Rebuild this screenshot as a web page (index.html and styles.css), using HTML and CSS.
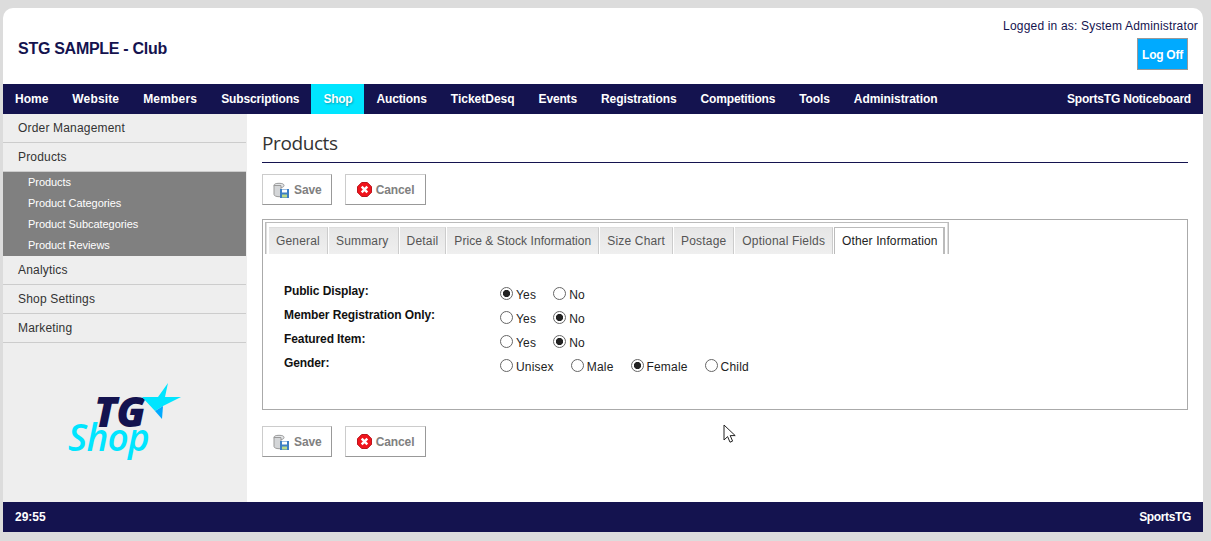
FILE: index.html
```html
<!DOCTYPE html>
<html lang="en">
<head>
<meta charset="utf-8">
<title>Products</title>
<link rel="stylesheet" href="styles.css">
</head>
<body>
<div class="page">
  <header class="header">
    <div class="club">STG SAMPLE - Club</div>
    <div class="user">
      <div class="logged">Logged in as: System Administrator</div>
      <button class="logoff" type="button">Log Off</button>
    </div>
  </header>
  <nav class="nav">
    <a class="nav-item">Home</a>
    <a class="nav-item">Website</a>
    <a class="nav-item">Members</a>
    <a class="nav-item">Subscriptions</a>
    <a class="nav-item active">Shop</a>
    <a class="nav-item">Auctions</a>
    <a class="nav-item">TicketDesq</a>
    <a class="nav-item">Events</a>
    <a class="nav-item">Registrations</a>
    <a class="nav-item">Competitions</a>
    <a class="nav-item">Tools</a>
    <a class="nav-item">Administration</a>
    <a class="nav-item notice">SportsTG Noticeboard</a>
  </nav>
  <div class="body">
    <aside class="side">
      <ul class="menu">
        <li class="menu-item">Order Management</li>
        <li class="menu-item">Products</li>
        <li class="submenu">
          <div class="sub-item">Products</div>
          <div class="sub-item">Product Categories</div>
          <div class="sub-item">Product Subcategories</div>
          <div class="sub-item">Product Reviews</div>
        </li>
        <li class="menu-item">Analytics</li>
        <li class="menu-item">Shop Settings</li>
        <li class="menu-item">Marketing</li>
      </ul>
      <svg class="logo" viewBox="3 343 244 159" width="244" height="159" aria-label="TG Shop">
        <text class="logo-tg" x="94" y="427">TG</text>
        <text class="logo-shop" x="68" y="451">Shop</text>
        <polygon fill="#00e5ff" points="142,397 158,397 168,383 165,397 181,397 163,406 155,411"/>
        <polygon fill="#00aaff" points="163,406 155,411 162,419"/>
      </svg>
    </aside>
    <main class="main">
      <h1 class="title">Products</h1>
      <div class="actions">
        <button class="btn" type="button">
          <svg class="ico" viewBox="0 0 16 16" width="16" height="16"><ellipse cx="6" cy="3.5" rx="5" ry="2.2" fill="#e4e6e8" stroke="#9a9a9a"/><path d="M1 3.5v9c0 1.2 2.2 2.2 5 2.2h2V3.5z" fill="#d4d6d8" stroke="#9a9a9a"/><rect x="7" y="7" width="9" height="9" fill="#3d7fc4"/><rect x="9" y="7.5" width="5" height="3" fill="#fff"/><rect x="9" y="12.5" width="5" height="3" fill="#b9d98a"/></svg>
          Save
        </button>
        <button class="btn btn-cancel" type="button">
          <svg class="ico" viewBox="0 0 16 16" width="15" height="15"><polygon points="5,0.5 11,0.5 15.5,5 15.5,11 11,15.5 5,15.5 0.5,11 0.5,5" fill="#f0141c" stroke="#b30d14"/><path d="M5 5l6 6M11 5l-6 6" stroke="#fff" stroke-width="2.6"/></svg>
          Cancel
        </button>
      </div>
      <section class="panel">
        <div class="tabs">
          <div class="tab">General</div>
          <div class="tab">Summary</div>
          <div class="tab">Detail</div>
          <div class="tab">Price &amp; Stock Information</div>
          <div class="tab">Size Chart</div>
          <div class="tab">Postage</div>
          <div class="tab">Optional Fields</div>
          <div class="tab current">Other Information</div>
        </div>
        <div class="form">
          <div class="label">Public Display:</div>
          <div class="opts">
            <label class="opt"><input class="radio" type="radio" name="a" checked>Yes</label>
            <label class="opt"><input class="radio" type="radio" name="a">No</label>
          </div>
          <div class="label">Member Registration Only:</div>
          <div class="opts">
            <label class="opt"><input class="radio" type="radio" name="b">Yes</label>
            <label class="opt"><input class="radio" type="radio" name="b" checked>No</label>
          </div>
          <div class="label">Featured Item:</div>
          <div class="opts">
            <label class="opt"><input class="radio" type="radio" name="c">Yes</label>
            <label class="opt"><input class="radio" type="radio" name="c" checked>No</label>
          </div>
          <div class="label">Gender:</div>
          <div class="opts">
            <label class="opt"><input class="radio" type="radio" name="d">Unisex</label>
            <label class="opt"><input class="radio" type="radio" name="d">Male</label>
            <label class="opt"><input class="radio" type="radio" name="d" checked>Female</label>
            <label class="opt"><input class="radio" type="radio" name="d">Child</label>
          </div>
        </div>
      </section>
      <div class="actions bottom">
        <button class="btn" type="button">
          <svg class="ico" viewBox="0 0 16 16" width="16" height="16"><ellipse cx="6" cy="3.5" rx="5" ry="2.2" fill="#e4e6e8" stroke="#9a9a9a"/><path d="M1 3.5v9c0 1.2 2.2 2.2 5 2.2h2V3.5z" fill="#d4d6d8" stroke="#9a9a9a"/><rect x="7" y="7" width="9" height="9" fill="#3d7fc4"/><rect x="9" y="7.5" width="5" height="3" fill="#fff"/><rect x="9" y="12.5" width="5" height="3" fill="#b9d98a"/></svg>
          Save
        </button>
        <button class="btn btn-cancel" type="button">
          <svg class="ico" viewBox="0 0 16 16" width="15" height="15"><polygon points="5,0.5 11,0.5 15.5,5 15.5,11 11,15.5 5,15.5 0.5,11 0.5,5" fill="#f0141c" stroke="#b30d14"/><path d="M5 5l6 6M11 5l-6 6" stroke="#fff" stroke-width="2.6"/></svg>
          Cancel
        </button>
      </div>
      <svg class="cursor" viewBox="0 0 13 20" width="13" height="20"><path d="M1 1v15l3.6-3.4 2.4 5.6 2.6-1.1-2.4-5.5h5z" fill="#fff" stroke="#222" stroke-width="1"/></svg>
    </main>
  </div>
  <footer class="footer">
    <span>29:55</span>
    <span class="footer-brand">SportsTG</span>
  </footer>
</div>
</body>
</html>
```
FILE: styles.css
```css
* { box-sizing: border-box; }
html, body { margin: 0; height: 100%; }
body {
  background: #dcdcdc;
  padding: 8px 8px 9px 3px;
  font-family: "Liberation Sans", Arial, sans-serif;
  font-size: 12px;
  letter-spacing: .18px;
  color: #222;
  overflow: hidden;
}
.page {
  height: 524px;
  display: flex;
  flex-direction: column;
  background: #fff;
  border-radius: 10px 10px 0 0;
}
.header {
  height: 76px;
  display: flex;
  justify-content: space-between;
  color: #14134f;
}
.club {
  font-size: 16px;
  font-weight: bold;
  letter-spacing: -.28px;
  padding: 32px 0 0 15px;
}
.user {
  display: flex;
  flex-direction: column;
  align-items: flex-end;
  padding: 11px 5px 0 0;
}
.logged { line-height: 14px; }
.logoff {
  width: 51px;
  height: 32px;
  margin: 5px 10px 0 0;
  padding: 1px 0 0;
  background: #00aaff;
  border: 1px solid #999;
  color: #fff;
  font: bold 12px "Liberation Sans", Arial, sans-serif;
  letter-spacing: -.25px;
}
.nav {
  height: 30px;
  display: flex;
  background: #14134f;
  color: #fff;
  font-weight: bold;
  letter-spacing: 0;
  line-height: 30px;
}
.nav-item { padding: 0 12px; }
.nav-item:nth-child(2) { letter-spacing: .14px; }
.nav-item:nth-child(3) { letter-spacing: .2px; }
.nav-item:nth-child(4) { letter-spacing: -.14px; }
.nav-item:nth-child(5) { letter-spacing: -.25px; }
.nav-item:nth-child(6) { letter-spacing: -.12px; }
.nav-item:nth-child(8) { letter-spacing: -.17px; }
.nav-item:nth-child(9) { letter-spacing: -.08px; }
.nav-item:nth-child(10) { letter-spacing: -.17px; }
.nav-item:nth-child(11) { letter-spacing: -.1px; }
.nav-item:nth-child(12) { letter-spacing: -.07px; }
.nav-item.active {
  background: #00e5ff;
  text-shadow: 1px 1px 2px rgba(0, 0, 0, .3);
}
.nav-item.notice { margin-left: auto; letter-spacing: -.2px; }
.body { flex: 1; display: flex; min-height: 0; position: relative; }
.side { width: 244px; background: #eee; flex: none; }
.menu { list-style: none; margin: 0; padding: 0; }
.menu-item {
  width: 243px;
  height: 29px;
  padding-left: 15px;
  line-height: 29px;
  color: #333;
  border-bottom: 1px solid #ccc;
}
.submenu {
  width: 243px;
  background: #808080;
  color: #fff;
  padding-left: 25px;
  font-size: 11px;
  letter-spacing: -.05px;
}
.sub-item { height: 21px; line-height: 21px; }
.logo { display: block; }
.logo-tg { font: italic 800 42px "Open Sans", sans-serif; letter-spacing: -1px; fill: #14134f; }
.logo-shop { font: italic 600 37px "Open Sans", sans-serif; letter-spacing: -.7px; fill: #00e5ff; }
.main { flex: 1; padding: 0 15px; min-width: 0; position: relative; }
.title {
  margin: 0;
  height: 49px;
  padding-top: 16px;
  font: 19px/27px "Open Sans", sans-serif;
  letter-spacing: -.4px;
  color: #333;
  border-bottom: 1px solid #14134f;
}
.actions { display: flex; gap: 13px; margin-top: 11px; }
.actions.bottom { margin-top: 16px; }
.btn {
  height: 31px;
  padding: 0 9px 0 10px;
  display: flex;
  align-items: center;
  gap: 5px;
  background: #fff;
  border: 1px solid #ccc;
  border-right-color: #999;
  border-bottom-color: #999;
  color: #808080;
  font: bold 12px "Liberation Sans", Arial, sans-serif;
  letter-spacing: -.1px;
}
.btn-cancel { padding: 0 11px; gap: 4px; }
.ico { flex: none; }
.panel {
  margin-top: 14px;
  height: 191px;
  border: 1px solid #aaa;
  padding: 2px;
}
.tabs {
  display: inline-flex;
  height: 32px;
  padding: 4px 3px 0 3px;
  gap: 1px;
  background: #fff;
  border: solid #bbb;
  border-width: 1px 1px 0 1px;
  box-shadow: inset 1px 0 #ddd, inset -1px 0 #ddd;
}
.tab {
  height: 27px;
  padding: 0 7px;
  line-height: 26px;
  color: #555;
  background: linear-gradient(#e6e6e6, #efefef);
  border-right: 1px solid #ccc;
  border-top: 1px solid #ddd;
}
.tab:nth-child(2) { padding-right: 9px; }
.tab:nth-child(4) { letter-spacing: .06px; }
.tab.current {
  background: #fff;
  color: #222;
  border: solid #bbb;
  border-width: 1px 2px 0 1px;
  padding-right: 5px;
  letter-spacing: .12px;
}
.form {
  display: grid;
  grid-template-columns: 216px 1fr;
  grid-auto-rows: 24px;
  margin: 29px 0 0 19px;
}
.label {
  font-weight: bold;
  color: #111;
  line-height: 24px;
  letter-spacing: -.1px;
  margin-top: -4px;
}
.opts { display: flex; gap: 17px; }
.opt { display: flex; align-items: center; color: #222; }
.radio {
  appearance: none;
  width: 13px;
  height: 13px;
  margin: -4px 3px 0 0;
  border: 1px solid #666;
  border-radius: 50%;
  background: #fff;
}
.radio:checked { background: radial-gradient(circle, #222 0 3.2px, #fff 4px); }
.footer {
  height: 30px;
  display: flex;
  justify-content: space-between;
  align-items: center;
  padding: 0 12px;
  background: #14134f;
  color: #fff;
  font-weight: bold;
  letter-spacing: 0;
}
.footer-brand { letter-spacing: -.35px; }
.cursor { position: absolute; left: 476px; top: 310px; }
```
